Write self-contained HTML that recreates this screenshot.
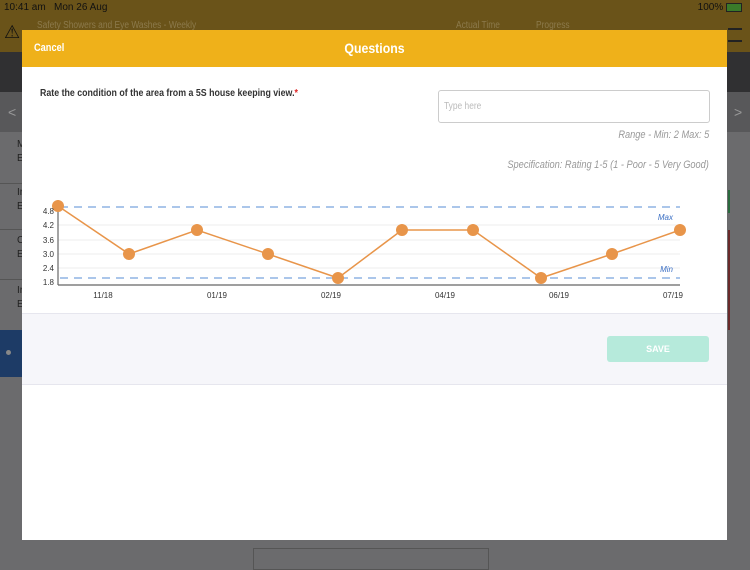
<!DOCTYPE html>
<html><head><style>
body{margin:0;width:750px;height:562px;overflow:hidden;background:#6b6b6d;font-family:"Liberation Sans",sans-serif;position:relative}
.a{position:absolute}
.n{transform:scaleX(0.84);transform-origin:left top;white-space:nowrap}
.r{transform:scaleX(0.84);transform-origin:right top;white-space:nowrap}
</style></head><body>
<div class="a" style="left:0;top:0;width:750px;height:52px;background:#6a5319"></div>
<div class="a" style="left:4px;top:2px;font-size:10px;color:#111">10:41 am&nbsp;&nbsp; Mon 26 Aug</div>
<div class="a" style="right:8px;top:2px;font-size:10px;color:#111">100% <span style="display:inline-block;width:14px;height:7px;background:#3a7a2a;border:1px solid #222;vertical-align:middle"></span></div>
<div class="a n" style="left:37px;top:20px;font-size:10px;color:#8c7a4c">Safety Showers and Eye Washes - Weekly</div>
<div class="a n" style="left:456px;top:20px;font-size:10px;color:#8c7a4c">Actual Time</div>
<div class="a n" style="left:536px;top:20px;font-size:10px;color:#8c7a4c">Progress</div>
<div class="a" style="left:4px;top:22px;font-size:18px;color:#111">⚠</div>
<div class="a" style="left:728px;top:28px;width:14px;height:10px;border-top:2px solid #222;border-bottom:2px solid #222"></div>
<div class="a" style="left:0;top:52px;width:750px;height:40px;background:#303032"></div>
<div class="a" style="left:0;top:92px;width:750px;height:40px;background:#58585a"></div>
<div class="a" style="left:8px;top:104px;color:#999;font-size:14px">&lt;</div>
<div class="a" style="left:734px;top:104px;color:#999;font-size:14px">&gt;</div>
<div class="a" style="left:17px;top:138px;font-size:10px;color:#222;line-height:14px">M<br>E</div>
<div class="a" style="left:17px;top:186px;font-size:10px;color:#222;line-height:14px">Ir<br>E</div>
<div class="a" style="left:17px;top:234px;font-size:10px;color:#222;line-height:14px">C<br>E</div>
<div class="a" style="left:17px;top:284px;font-size:10px;color:#222;line-height:14px">Ir<br>E</div>
<div class="a" style="left:0;top:183px;width:22px;height:1px;background:#555"></div>
<div class="a" style="left:0;top:229px;width:22px;height:1px;background:#555"></div>
<div class="a" style="left:0;top:279px;width:22px;height:1px;background:#555"></div>
<div class="a" style="left:0;top:330px;width:22px;height:47px;background:#1d3b66"></div>
<div class="a" style="left:6px;top:350px;width:5px;height:5px;border-radius:50%;background:#888"></div>
<div class="a" style="left:728px;top:190px;width:2px;height:23px;background:#2b6a3e"></div>
<div class="a" style="left:728px;top:230px;width:2px;height:100px;background:#6a2a2a"></div>
<div class="a" style="left:253px;top:548px;width:234px;height:20px;border:1px solid #555"></div>
<div class="a" style="left:22px;top:30px;width:705px;height:510px;background:#fff"></div>
<div class="a" style="left:22px;top:30px;width:705px;height:37px;background:#efb11a"></div>
<div class="a n" style="left:34px;top:42px;color:#fff;font-size:11px;font-weight:bold">Cancel</div>
<div class="a" style="left:22px;top:40px;width:705px;text-align:center;color:#fff;font-size:14px;font-weight:bold;transform:scaleX(0.88)">Questions</div>
<div class="a n" style="left:40px;top:87px;font-size:10.5px;font-weight:bold;color:#333">Rate the condition of the area from a 5S house keeping view.<span style="color:#d22">*</span></div>
<div class="a" style="left:438px;top:90px;width:270px;height:31px;border:1px solid #ccc;border-radius:3px"></div>
<div class="a n" style="left:444px;top:101px;font-size:10px;color:#bbb">Type here</div>
<div class="a r" style="right:41px;top:129px;font-size:11px;color:#999;font-style:italic">Range - Min: 2 Max: 5</div>
<div class="a r" style="right:41px;top:159px;font-size:11px;color:#999;font-style:italic">Specification: Rating 1-5 (1 - Poor - 5 Very Good)</div>
<svg class="a" style="left:0;top:0" width="750" height="562">
<g stroke="#eee" stroke-width="1"><line x1="58" y1="225" x2="680" y2="225"/><line x1="58" y1="240" x2="680" y2="240"/><line x1="58" y1="254" x2="680" y2="254"/><line x1="58" y1="268" x2="680" y2="268"/></g>
<g stroke="#8fb3e3" stroke-width="1.5" stroke-dasharray="8,6"><line x1="60" y1="207" x2="680" y2="207"/><line x1="60" y1="278" x2="680" y2="278"/></g>
<line x1="58" y1="200" x2="58" y2="285" stroke="#666" stroke-width="1.2"/>
<line x1="58" y1="285" x2="680" y2="285" stroke="#666" stroke-width="1.2"/>
<polyline fill="none" stroke="#e8954a" stroke-width="1.5" points="58,206 129,254 197,230 268,254 338,278 402,230 473,230 541,278 612,254 680,230"/>
<g fill="#e8954a"><circle cx="58" cy="206" r="6"/><circle cx="129" cy="254" r="6"/><circle cx="197" cy="230" r="6"/><circle cx="268" cy="254" r="6"/><circle cx="338" cy="278" r="6"/><circle cx="402" cy="230" r="6"/><circle cx="473" cy="230" r="6"/><circle cx="541" cy="278" r="6"/><circle cx="612" cy="254" r="6"/><circle cx="680" cy="230" r="6"/></g>
<g font-size="8" fill="#333" font-family="Liberation Sans" text-anchor="end"><text x="54" y="214">4.8</text><text x="54" y="228">4.2</text><text x="54" y="243">3.6</text><text x="54" y="257">3.0</text><text x="54" y="271">2.4</text><text x="54" y="285">1.8</text></g>
<g font-size="8" fill="#333" font-family="Liberation Sans" text-anchor="middle"><text x="103" y="298">11/18</text><text x="217" y="298">01/19</text><text x="331" y="298">02/19</text><text x="445" y="298">04/19</text><text x="559" y="298">06/19</text><text x="673" y="298">07/19</text></g>
<g font-size="8" fill="#3b6fc4" font-style="italic" font-family="Liberation Sans" text-anchor="end"><text x="673" y="220">Max</text><text x="673" y="272">Min</text></g>
</svg>
<div class="a" style="left:22px;top:313px;width:705px;height:70px;background:#f6f6fa;border-top:1px solid #e6e6ee;border-bottom:1px solid #e6e6ee"></div>
<div class="a" style="left:607px;top:336px;width:102px;height:26px;background:#b6eadb;border-radius:3px;color:#fff;font-size:9px;font-weight:bold;text-align:center;line-height:26px">SAVE</div>
</body></html>
